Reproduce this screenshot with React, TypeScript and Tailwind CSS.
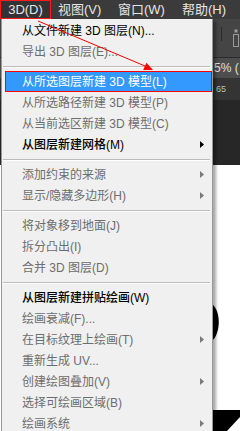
import React from "react";

type Row =
  | { kind: "sep" }
  | { kind: "item"; label: string; state: "on" | "off" | "hl" | "strong"; arrow?: boolean };

const rows: Row[] = [
  { kind: "item", label: "从文件新建 3D 图层(N)...", state: "on" },
  { kind: "item", label: "导出 3D 图层(E)...", state: "off" },
  { kind: "sep" },
  { kind: "item", label: "从所选图层新建 3D 模型(L)", state: "hl" },
  { kind: "item", label: "从所选路径新建 3D 模型(P)", state: "off" },
  { kind: "item", label: "从当前选区新建 3D 模型(C)", state: "off" },
  { kind: "item", label: "从图层新建网格(M)", state: "strong", arrow: true },
  { kind: "sep" },
  { kind: "item", label: "添加约束的来源", state: "off", arrow: true },
  { kind: "item", label: "显示/隐藏多边形(H)", state: "off", arrow: true },
  { kind: "sep" },
  { kind: "item", label: "将对象移到地面(J)", state: "off" },
  { kind: "item", label: "拆分凸出(I)", state: "off" },
  { kind: "item", label: "合并 3D 图层(D)", state: "off" },
  { kind: "sep" },
  { kind: "item", label: "从图层新建拼贴绘画(W)", state: "strong" },
  { kind: "item", label: "绘画衰减(F)...", state: "off" },
  { kind: "item", label: "在目标纹理上绘画(T)", state: "off", arrow: true },
  { kind: "item", label: "重新生成 UV...", state: "off" },
  { kind: "item", label: "创建绘图叠加(V)", state: "off", arrow: true },
  { kind: "item", label: "选择可绘画区域(B)", state: "off" },
  { kind: "item", label: "绘画系统", state: "off", arrow: true },
];

function Arrow({ color }: { color: string }) {
  return (
    <svg width="4" height="7" viewBox="0 0 4 7">
      <polygon points="0,0 4,3.5 0,7" fill={color} />
    </svg>
  );
}

export default function App() {
  return (
    <div className="relative w-[240px] h-[431px] overflow-hidden bg-white font-['Liberation_Sans','Noto_Sans_CJK_SC',sans-serif]">
      {/* menu bar */}
      <div className="flex h-[19px] bg-[#3b3b3b] text-[13px] leading-none text-[#e6e6e6]">
        <div className="w-[51px] h-[19px] border border-[#ff1a1a] bg-[#333333] flex items-center justify-center">
          3D(D)
        </div>
        <div className="w-[59px] pl-[7px] flex items-center">视图(V)</div>
        <div className="w-[62px] pl-[8px] flex items-center">窗口(W)</div>
        <div className="pl-[10px] flex items-center">帮助(H)</div>
      </div>

      {/* options bar */}
      <div className="h-[39px] bg-[#454545] border-b border-[#2b2b2b] flex items-center pl-[221px]">
        <div className="w-px h-[14px] bg-[#2a2a2a] self-start mt-[8px]" />
        <svg className="ml-[11px]" width="6" height="18" viewBox="0 0 6 18">
          <rect x="1.5" y="0.5" width="3" height="3" fill="#9a9a9a" />
          <rect x="0.5" y="5.5" width="5" height="12" fill="none" stroke="#9a9a9a" />
        </svg>
      </div>

      {/* document tab */}
      <div className="h-[20px] bg-[#4d4d4d] text-[12px] leading-none text-[#e0e0e0] pl-[214px] flex items-center">
        5% (
      </div>

      {/* ruler */}
      <div className="h-[22px] bg-[#343434] text-[9px] leading-none text-[#bdbdbd] pl-[216px] pt-[7px]">
        65
      </div>

      {/* dark canvas area */}
      <div className="h-[65px] bg-[#272727]" />

      {/* white canvas with black shapes */}
      <svg className="absolute left-0 top-0" width="240" height="431" viewBox="0 0 240 431">
        <path d="M212 304 C221 311 221 333 212 341 Z" fill="#000" />
        <polygon points="212,410 240,410 240,417 227,431 212,431" fill="#000" />
      </svg>

      {/* dropdown menu */}
      <div className="absolute left-[1px] top-[19px] w-[212px] h-[420px] bg-[#f0f0f0] border-l border-r border-[#979797] pt-[1px] shadow-[3px_2px_3px_rgba(0,0,0,0.35)] text-[12px] leading-none">
        {rows.map((r, i) => {
          if (r.kind === "sep") {
            return (
              <div key={i} className="h-[9px] flex flex-col justify-center ml-[1px] mr-[2px]">
                <div className="h-px bg-[#bcbcbc]" />
                <div className="h-px bg-white" />
              </div>
            );
          }
          if (r.state === "hl") {
            return (
              <div
                key={i}
                className="h-[21px] ml-[3px] bg-[#3399ff] border border-[#ff0000] pl-[16px] flex items-center text-white"
              >
                {r.label}
              </div>
            );
          }
          const color =
            r.state === "off" ? "text-[#6d6d6d]" : r.state === "strong" ? "text-black font-medium" : "text-black";
          return (
            <div key={i} className={`h-[21px] pl-[20px] pr-[8px] flex items-center justify-between ${color}`}>
              <span>{r.label}</span>
              {r.arrow ? <Arrow color={r.state === "off" ? "#7a7a7a" : "#000"} /> : null}
            </div>
          );
        })}
      </div>

      {/* red annotation arrow */}
      <svg className="absolute left-0 top-0 pointer-events-none" width="240" height="431" viewBox="0 0 240 431">
        <line x1="38" y1="21" x2="145" y2="66" stroke="#ff0000" strokeWidth="1" />
        <polygon points="153,70 143.2,70 146.4,62.7" fill="#ff0000" />
      </svg>
    </div>
  );
}
